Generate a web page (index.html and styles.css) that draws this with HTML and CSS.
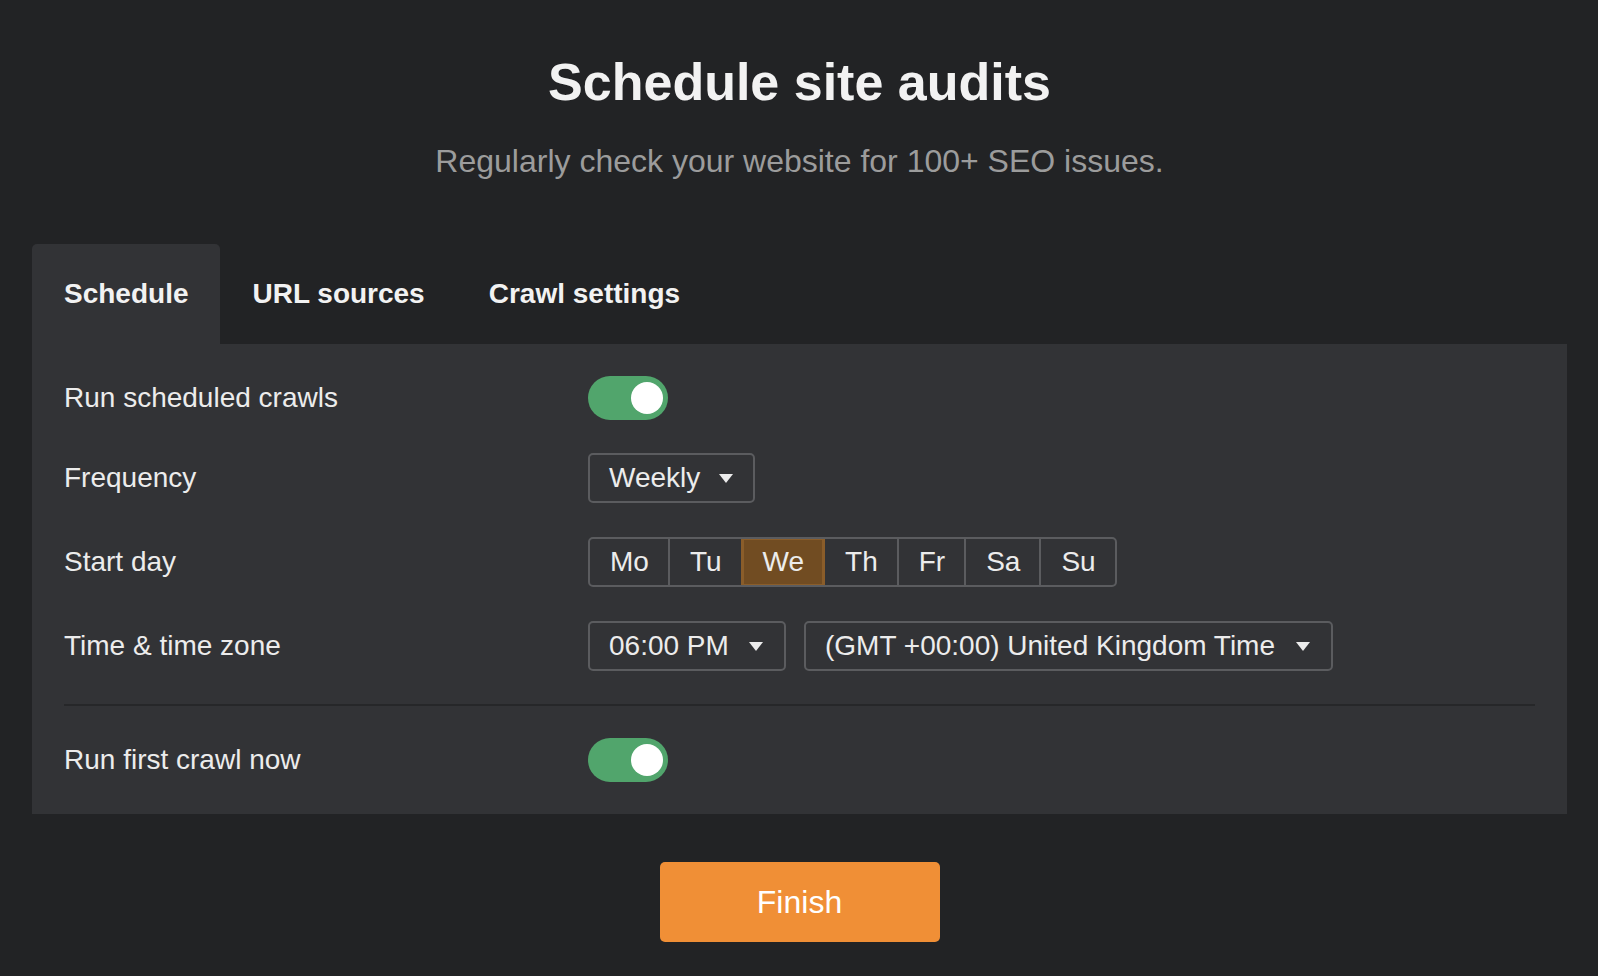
FILE: index.html
```html
<!DOCTYPE html>
<html lang="en">
<head>
    <meta charset="UTF-8" />
    <meta name="viewport" content="width=device-width, initial-scale=1.0"/>
    <title>Schedule site audits</title>
    <link rel="stylesheet" href="styles.css">
</head>
<body>
<div class="page">
    <h1 class="title">Schedule site audits</h1>
    <p class="subtitle">Regularly check your website for 100+ SEO issues.</p>

    <div class="tabs">
        <div class="tab active">Schedule</div>
        <div class="tab">URL sources</div>
        <div class="tab">Crawl settings</div>
    </div>

    <div class="panel">
        <div class="row">
            <div class="label">Run scheduled crawls</div>
            <div class="toggle on"><span class="knob"></span></div>
        </div>

        <div class="row">
            <div class="label">Frequency</div>
            <div class="select">Weekly <span class="caret"></span></div>
        </div>

        <div class="row">
            <div class="label">Start day</div>
            <div class="days">
                <div class="day">Mo</div>
                <div class="day">Tu</div>
                <div class="day selected">We</div>
                <div class="day">Th</div>
                <div class="day">Fr</div>
                <div class="day">Sa</div>
                <div class="day">Su</div>
            </div>
        </div>

        <div class="row">
            <div class="label">Time &amp; time zone</div>
            <div class="controls">
                <div class="select select-time">06:00 PM <span class="caret"></span></div>
                <div class="select select-zone">(GMT +00:00) United Kingdom Time <span class="caret"></span></div>
            </div>
        </div>

        <div class="divider"></div>

        <div class="row">
            <div class="label">Run first crawl now</div>
            <div class="toggle on"><span class="knob"></span></div>
        </div>
    </div>

    <div class="actions">
        <button type="button" class="finish-btn">Finish</button>
    </div>
</div>
</body>
</html>
```

FILE: styles.css
```css
body {
    margin: 0;
    background: #222325;
    color: #f0f0f0;
    font-family: "Liberation Sans", Arial, sans-serif;
}
.page {
    padding: 52px 31px 0 32px;
}
.title {
    margin: 0;
    font-size: 52px;
    line-height: 60px;
    font-weight: bold;
    text-align: center;
    color: #f2f2f2;
}
.subtitle {
    margin: 29px 0 0;
    font-size: 32px;
    line-height: 40px;
    text-align: center;
    color: #9c9c9c;
}
.tabs {
    display: flex;
    margin-top: 63px;
}
.tab {
    padding: 32px;
    font-size: 28px;
    line-height: 36px;
    font-weight: bold;
    color: #f2f2f2;
    border-radius: 5px 5px 0 0;
}
.tab.active {
    background: #323336;
}
.panel {
    background: #323336;
    padding: 15px 32px;
}
.row {
    display: flex;
    align-items: center;
    padding: 17px 0;
}
.row:first-child {
    padding-bottom: 16px;
}
.label {
    width: 524px;
    flex-shrink: 0;
    font-size: 28px;
    line-height: 36px;
    color: #ececec;
}
.toggle {
    display: flex;
    align-items: center;
    justify-content: flex-end;
    box-sizing: border-box;
    width: 80px;
    height: 44px;
    padding: 0 5px;
    border-radius: 22px;
    background: #51a56c;
}
.knob {
    width: 32px;
    height: 32px;
    border-radius: 50%;
    background: #fff;
}
.controls {
    display: flex;
    gap: 18px;
}
.select {
    display: inline-flex;
    align-items: center;
    justify-content: space-between;
    gap: 19px;
    box-sizing: border-box;
    height: 50px;
    padding: 0 20px 0 19px;
    border: 2px solid #5b5c5f;
    border-radius: 5px;
    font-size: 28px;
    color: #ececec;
}
.select-time {
    width: 198px;
    padding-right: 21px;
}
.select-zone {
    width: 529px;
    padding-right: 21px;
}
.caret {
    width: 0;
    height: 0;
    border-left: 7px solid transparent;
    border-right: 7px solid transparent;
    border-top: 9px solid #ececec;
}
.days {
    display: flex;
    border: 2px solid #5b5c5f;
    border-radius: 5px;
    overflow: hidden;
}
.day {
    height: 46px;
    line-height: 46px;
    padding: 0 19px 0 20px;
    font-size: 28px;
    color: #ececec;
    border-left: 2px solid #5b5c5f;
}
.day:first-child {
    border-left: none;
}
.day.selected {
    background: #714c22;
    border-left-color: #8a5d2a;
    box-shadow: inset 0 0 0 1px #8a5d2a;
}
.day.selected + .day {
    border-left-color: #8a5d2a;
}
.divider {
    height: 2px;
    margin: 16px 0 15px;
    background: #262729;
}
.actions {
    display: flex;
    justify-content: center;
    margin-top: 48px;
}
.finish-btn {
    width: 280px;
    height: 80px;
    border: none;
    border-radius: 5px;
    background: #f08f36;
    color: #fff;
    font-family: inherit;
    font-size: 32px;
    cursor: pointer;
}
```
